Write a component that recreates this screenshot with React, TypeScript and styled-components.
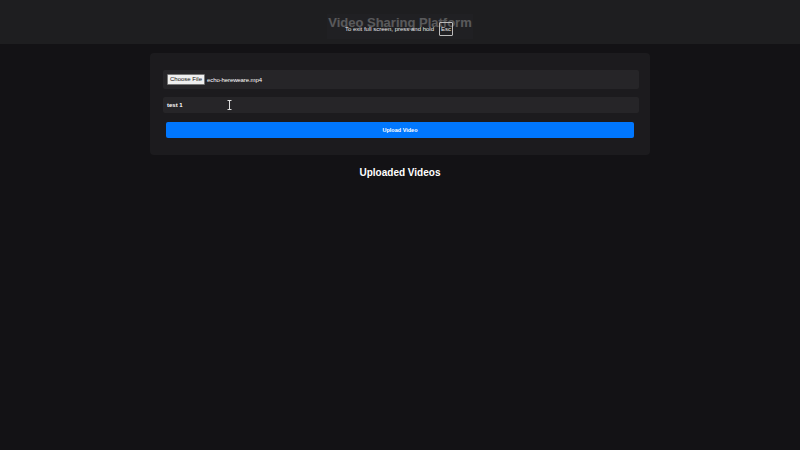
import styled, { createGlobalStyle } from "styled-components";

const GlobalStyle = createGlobalStyle`
  html, body {
    margin: 0;
    padding: 0;
    background: #131215;
    font-family: "Liberation Sans", Arial, sans-serif;
    color: #fff;
  }
`;

const Page = styled.div`
  position: relative;
  width: 100%;
  min-height: 450px;
  background: #131215;
`;

const Header = styled.header`
  height: 44px;
  background: #1e1e20;
  display: flex;
  justify-content: center;
  align-items: center;
`;

const Title = styled.h1`
  margin: 0;
  font-size: 13px;
  font-weight: bold;
  color: #fff;
`;

const Main = styled.main`
  display: flex;
  flex-direction: column;
  align-items: center;
  padding-top: 9px;
`;

const Card = styled.form`
  width: 500px;
  box-sizing: border-box;
  padding: 17px 11px 17px 13px;
  background: #1c1b1e;
  border-radius: 4px;
  display: flex;
  flex-direction: column;
`;

const Field = styled.div<{ $h: number; $mb: number }>`
  position: relative;
  height: ${(p) => p.$h}px;
  margin-bottom: ${(p) => p.$mb}px;
  background: #262528;
  border-radius: 2px;
  display: flex;
  align-items: center;
  padding: 0 4px;
  font-size: 6px;
  color: #fff;
`;

const ChooseButton = styled.span`
  background: #efefef;
  color: #111;
  border: 1px solid #767676;
  border-radius: 1px;
  padding: 1px 2px;
  font-size: 6px;
  margin-right: 2px;
  line-height: 7px;
`;

const FileName = styled.span`
  font-weight: normal;
  letter-spacing: -0.1px;
`;

const TextValue = styled.span`
  font-weight: bold;
`;

const Cursor = styled.svg`
  position: absolute;
  left: 64px;
  top: 3px;
`;

const UploadButton = styled.div`
  margin: 0 5px 0 3px;
  height: 16px;
  background: #0077ff;
  border-radius: 2px;
  display: flex;
  justify-content: center;
  align-items: center;
  font-size: 5.5px;
  font-weight: bold;
  color: #fff;
`;

const Heading = styled.h2`
  margin: 12px 0 0;
  font-size: 10px;
  font-weight: bold;
  color: #fff;
`;

const ExitNotice = styled.div`
  position: absolute;
  left: 327px;
  top: 14px;
  width: 146px;
  height: 25px;
  box-sizing: border-box;
  background: rgba(34, 33, 36, 0.75);
  display: flex;
  align-items: center;
  justify-content: flex-end;
  padding: 5px 20px 0 0;
  gap: 5px;
  font-size: 6px;
  color: #e6e6e6;
`;

const EscKey = styled.span`
  width: 12px;
  height: 12px;
  border: 1px solid #bbb;
  border-radius: 1px;
  display: flex;
  align-items: center;
  justify-content: center;
  font-size: 6px;
`;

export default function App() {
  return (
    <Page>
      <GlobalStyle />
      <Header>
        <Title>Video Sharing Platform</Title>
      </Header>
      <Main>
        <Card>
          <Field $h={19} $mb={8}>
            <ChooseButton>Choose File</ChooseButton>
            <FileName>echo-hereweare.mp4</FileName>
          </Field>
          <Field $h={16} $mb={9}>
            <TextValue>test 1</TextValue>
            <Cursor width="5" height="10" viewBox="0 0 5 10">
              <path d="M0.5 0.5h4M2.5 0.5v9M0.5 9.5h4" stroke="#ddd" strokeWidth="1" fill="none" />
            </Cursor>
          </Field>
          <UploadButton>Upload Video</UploadButton>
        </Card>
        <Heading>Uploaded Videos</Heading>
      </Main>
      <ExitNotice>
        <span>To exit full screen, press and hold</span>
        <EscKey>Esc</EscKey>
      </ExitNotice>
    </Page>
  );
}
